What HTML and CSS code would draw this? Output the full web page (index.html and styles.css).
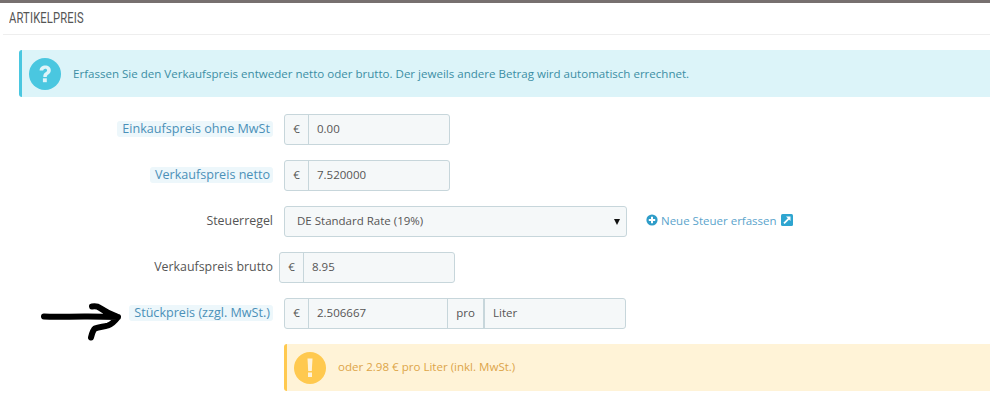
FILE: index.html
```html
<!DOCTYPE html>
<html lang="de">
<head>
<meta charset="utf-8">
<title>Artikelpreis</title>
<link rel="stylesheet" href="styles.css">
</head>
<body>
<div class="topbar"></div>
<h3 class="heading"><span class="heading-text">ARTIKELPREIS</span></h3>
<div class="content">
  <div class="alert alert-info">
    <svg class="alert-icon" viewBox="0 0 32 32"><circle cx="16" cy="16" r="16" fill="#4ac7e0"/><path d="M10.600 12.600c.2-3.400 2.600-5 5.600-5 3.200 0 5.600 1.800 5.600 4.700 0 2.100-1.100 3.200-2.500 4.200-1.200.9-1.500 1.300-1.500 2.500h-3.500c-.1-2.200.6-3.300 2-4.400 1.100-.8 1.800-1.300 1.800-2.300 0-1-.8-1.600-1.800-1.600-1.200 0-2 .8-2.100 1.900z" fill="#dff4f9"/><rect x="13.900" y="20.300" width="3.900" height="3.900" fill="#dff4f9"/></svg>
    <span class="alert-text">Erfassen Sie den Verkaufspreis entweder netto oder brutto. Der jeweils andere Betrag wird automatisch errechnet.</span>
  </div>
  <form class="form">
    <div class="row">
      <div class="label-col"><span class="hint">Einkaufspreis ohne MwSt</span></div>
      <div class="group w-166"><span class="addon">€</span><span class="field">0.00</span></div>
    </div>
    <div class="row">
      <div class="label-col"><span class="hint">Verkaufspreis netto</span></div>
      <div class="group w-166"><span class="addon">€</span><span class="field">7.520000</span></div>
    </div>
    <div class="row">
      <div class="label-col"><span class="plain">Steuerregel</span></div>
      <div class="group w-343 select"><span class="field">DE Standard Rate (19%)</span><span class="caret"></span></div>
      <a class="tax-link">
        <svg class="plus" viewBox="0 0 12 12"><circle cx="6" cy="6" r="5.600" fill="#2e9cc8"/><path d="M2.800 6h6.400M6 2.800v6.400" stroke="#fff" stroke-width="2"/></svg>
        <span>Neue Steuer erfassen</span>
        <svg class="ext" viewBox="0 0 12 12"><rect width="12" height="12" rx="1.500" fill="#2ea5d0"/><path d="M3 9.300 8 4.300" stroke="#fff" stroke-width="1.800"/><path d="M5 2.500h4.500v4.500z" fill="#fff"/></svg>
      </a>
    </div>
    <div class="row">
      <div class="label-col"><span class="plain">Verkaufspreis brutto</span></div>
      <div class="group w-176 shifted"><span class="addon">€</span><span class="field">8.95</span></div>
    </div>
    <div class="row">
      <div class="label-col"><span class="hint">Stückpreis (zzgl. MwSt.)</span></div>
      <div class="group w-342"><span class="addon">€</span><span class="field price">2.506667</span><span class="addon pro">pro</span><span class="field">Liter</span></div>
    </div>
    <div class="row">
      <div class="label-col"></div>
      <div class="alert alert-warning">
        <svg class="alert-icon" viewBox="0 0 32 32"><circle cx="16" cy="16" r="16" fill="#ffc94f"/><path d="M13.500 6.500h5l-.7 12.500h-3.600z" fill="#fff3d9"/><rect x="14" y="20.500" width="4" height="4.500" fill="#fff3d9"/></svg>
        <span class="alert-text">oder 2.98 € pro Liter (inkl. MwSt.)</span>
      </div>
    </div>
  </form>
</div>
<svg class="arrow" viewBox="0 0 84 46"><path d="M5 16.500c14 .8 28-.2 44 0 10 .2 20 .3 30 .5M53 6.500c3-.5 6 0 8 1.500 5 3.500 11 6.500 18 9-3 4-6 7-10 8.500-5 1.500-9 1-13 3-2 1.500-3 5-4 9" fill="none" stroke="#000" stroke-width="6" stroke-linecap="round" stroke-linejoin="round"/></svg>
</body>
</html>
```
FILE: styles.css
```css
* { box-sizing: border-box; }
html, body { margin: 0; padding: 0; }
body {
  position: relative;
  height: 407px;
  overflow: hidden;
  background: #fff;
  font-family: "Open Sans", sans-serif;
  font-size: 11.5px;
  color: #555;
}
.topbar { height: 3px; background: #77706f; }
.heading {
  margin: 0 0 0 3px;
  height: 32px;
  border-bottom: 1px solid #eee;
  padding: 6px 0 0 6px;
  font-weight: 400;
  font-size: 14px;
  line-height: 18px;
  color: #555;
}
.heading-text {
  display: inline-block;
  font-family: "Roboto", sans-serif;
  transform: scaleX(.8);
  transform-origin: left center;
  letter-spacing: .2px;
}
.content { padding: 15px 0 0 19px; }
.alert {
  display: flex;
  align-items: center;
  height: 47px;
  border-left: 3px solid;
  border-radius: 3px 0 0 3px;
  padding-left: 7px;
  gap: 12px;
}
.alert-text { font-size: 11.55px; }
.alert-icon { width: 32px; height: 32px; flex: none; }
.alert-info { background: #dcf4f9; border-color: #4ac7e0; color: #3b8ea4; }
.alert-warning { flex: 1; background: #fff3d7; border-color: #ffc94f; color: #dda549; }
.alert-warning .alert-text { position: relative; top: -1px; }
.form { margin-top: 17px; }
.row { display: flex; align-items: flex-start; margin-bottom: 15px; height: 31px; }
.row:last-child { height: 47px; margin: 0; }
.label-col {
  width: 254px;
  flex: none;
  text-align: right;
  padding-top: 6px;
  line-height: 18px;
  margin-right: 11px;
  font-size: 12.4px;
}
.hint {
  display: inline-block;
  height: 16px;
  line-height: 16px;
  padding: 0 3px 0 5px;
  background: #edf7fb;
  border-radius: 3px;
  color: #4b90b8;
  font-size: 12.6px;
}
.plain { color: #555; }
.group {
  display: flex;
  height: 31px;
  background: #f5f8f9;
  border: 1px solid #c7d6db;
  border-radius: 3px;
  line-height: 27px;
  color: #555;
}
.w-166 { width: 166px; }
.w-176 { width: 176px; }
.w-342 { width: 342px; }
.w-343 { width: 343px; }
.shifted { margin-left: -5px; }
.addon {
  width: 24px;
  flex: none;
  text-align: center;
  border-right: 1px solid #c7d6db;
}
.field { flex: 1; padding-left: 8px; white-space: nowrap; }
.field.price { flex: none; width: 138px; }
.addon.pro { width: 38px; border-left: 1px solid #c7d6db; border-right-width: 2px; }
.select .field { padding-left: 12px; }
.caret {
  align-self: center;
  margin-right: 6px;
  border-left: 3.500px solid transparent;
  border-right: 3.500px solid transparent;
  border-top: 6px solid #111;
}
.tax-link {
  display: flex;
  align-items: center;
  height: 28px;
  margin-left: 19px;
  gap: 3px;
  color: #5ba4cc;
}
.plus { width: 12px; height: 12px; }
.ext { width: 12px; height: 12px; margin-left: 1px; }
.arrow {
  position: absolute;
  left: 39px;
  top: 300px;
  width: 84px;
  height: 46px;
}
```
